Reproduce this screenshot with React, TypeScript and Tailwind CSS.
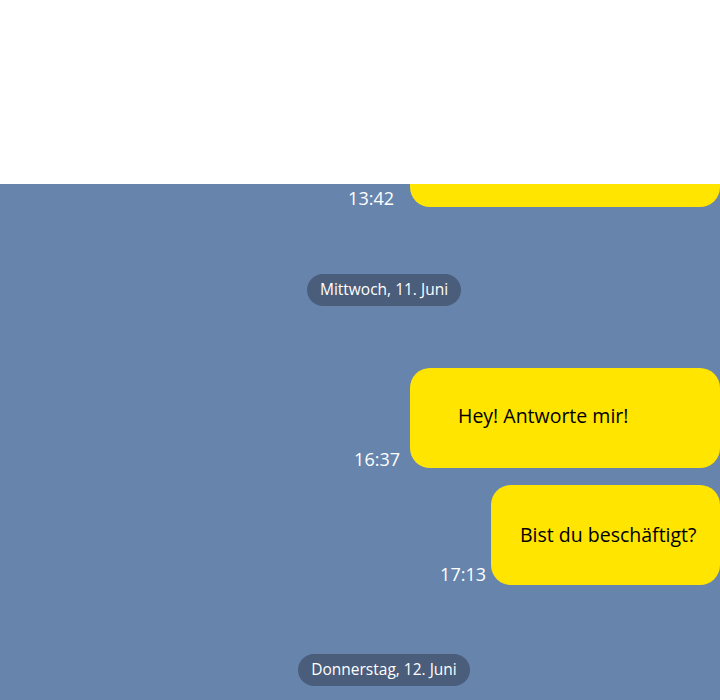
import React from "react";

const font = { fontFamily: '"Open Sans", "Noto Sans", sans-serif' };

const DatePill = ({ label }: { label: string }) => (
  <div className="flex justify-center pl-[48px]">
    <div className="h-[32px] px-[13px] rounded-full bg-[#4a5d7b] text-white text-[15.5px] flex items-center">
      {label}
    </div>
  </div>
);

export default function App() {
  return (
    <div className="w-[720px] h-[700px] overflow-hidden bg-[#6784ad]" style={font}>
      <div className="h-[184px] bg-white" />

      <div className="flex justify-end items-end">
        <span className="text-white text-[18px] leading-[20px] mr-[16px] mb-[-1px]">13:42</span>
        <div className="w-[310px] h-[23px] bg-[#ffe500] rounded-b-[20px]" />
      </div>

      <div className="mt-[67px]">
        <DatePill label="Mittwoch, 11. Juni" />
      </div>

      <div className="mt-[62px] flex justify-end items-end">
        <span className="text-white text-[18px] leading-[20px] mr-[10px] mb-[-1px]">16:37</span>
        <div className="w-[310px] h-[100px] bg-[#ffe500] rounded-[20px] pl-[48px] pt-[36px] text-[19.5px] leading-[24px] text-black">
          Hey! Antworte mir!
        </div>
      </div>

      <div className="mt-[17px] flex justify-end items-end">
        <span className="text-white text-[18px] leading-[20px] mr-[5px] mb-[1px]">17:13</span>
        <div className="w-[229px] h-[100px] bg-[#ffe500] rounded-[20px] pl-[29px] pt-[38px] text-[19.5px] leading-[24px] text-black">
          Bist du beschäftigt?
        </div>
      </div>

      <div className="mt-[69px]">
        <DatePill label="Donnerstag, 12. Juni" />
      </div>
    </div>
  );
}
